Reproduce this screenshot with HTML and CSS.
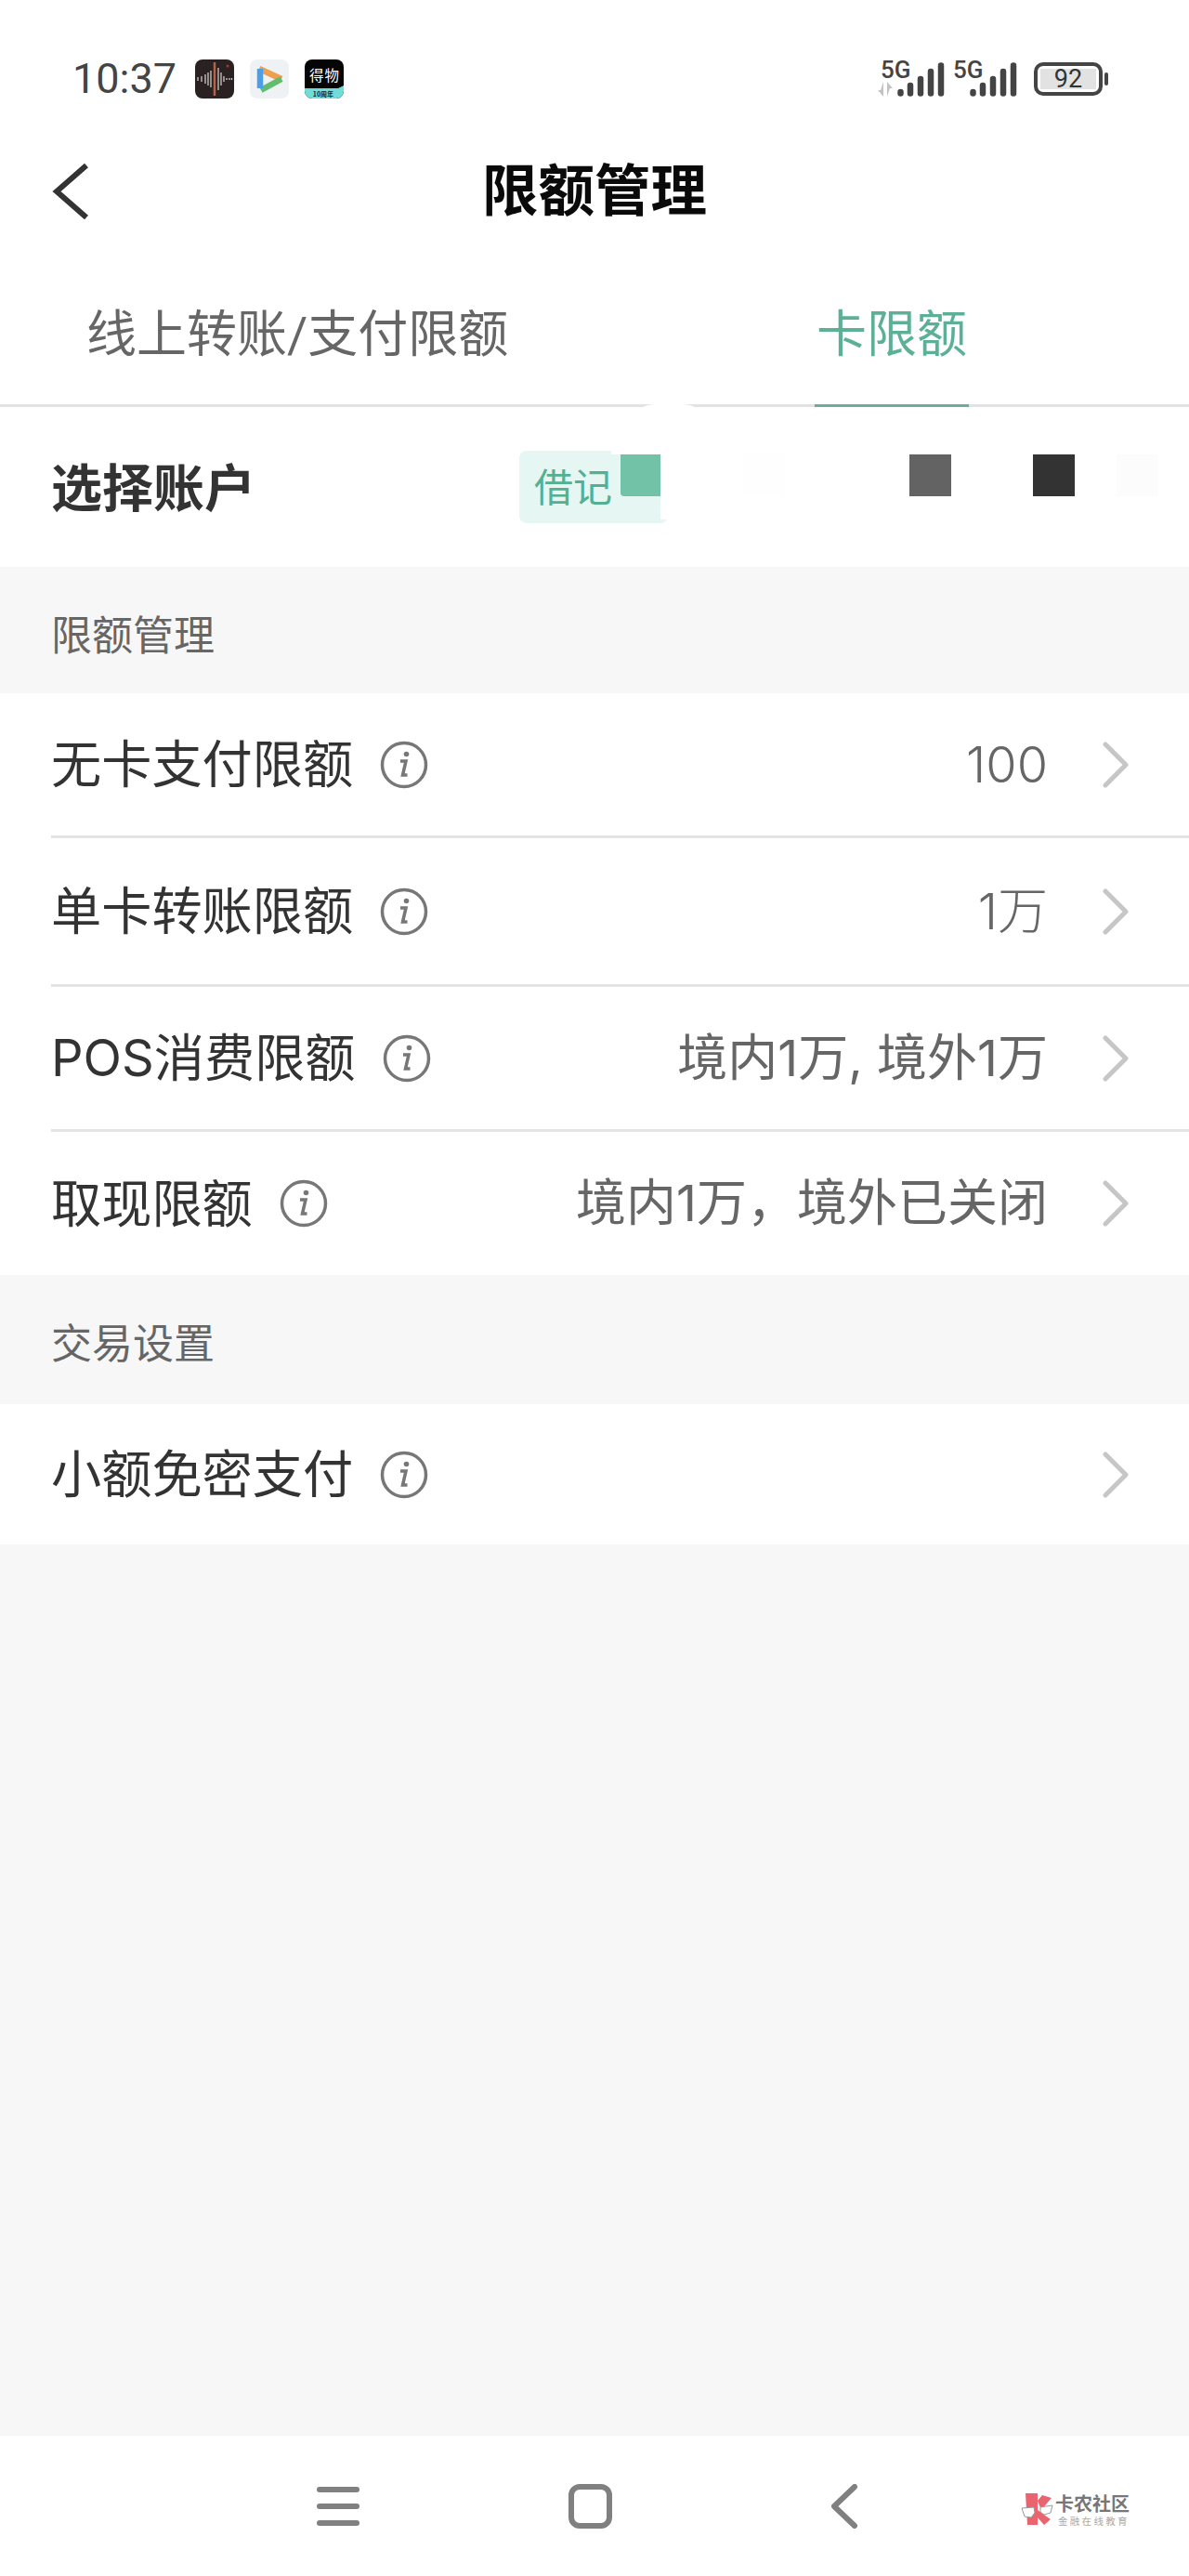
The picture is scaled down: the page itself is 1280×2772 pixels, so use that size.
FILE: index.html
```html
<!DOCTYPE html>
<html lang="zh-CN">
<head>
<meta charset="utf-8">
<title>限额管理</title>
<link rel="stylesheet" href="styles.css">
</head>
<body>
<div class="page">
  <header class="status">
    <div class="status-left">
      <span class="time">10:37</span>
      <svg class="app-icon" viewBox="0 0 42 42"><rect width="42" height="42" rx="8" fill="#2a2222"/><path d="M3 19v4M7 18v6M11 16v10M14 14v14M17 12v18M25 9v24M28 14v14M31 18v6M34 20v2M37 20v2M39.500 20v2" stroke="#cfc8c6" stroke-width="1.300" fill="none"/><path d="M21 3v36" stroke="#b5624a" stroke-width="2.500"/><circle cx="35" cy="7" r="1.500" fill="#a33"/></svg>
      <svg class="app-icon" viewBox="0 0 42 42"><rect width="42" height="42" rx="8" fill="#eef2f5"/><path d="M10 10 L34 21" stroke="#eda04d" stroke-width="6.500" fill="none"/><path d="M12 33 L34 21" stroke="#63bd6e" stroke-width="6.500" fill="none"/><path d="M11 10 V31" stroke="#4c9ee8" stroke-width="6.500" fill="none"/></svg>
      <svg class="app-icon" viewBox="0 0 42 42"><rect width="42" height="42" rx="8" fill="#050505"/><path d="M0 31h36l6-3v6a8 8 0 0 1-8 8H8a8 8 0 0 1-8-8z" fill="#6fdcd8"/><text class="dewu-name" x="21" y="23" text-anchor="middle" textLength="32">得物</text><text class="dewu-sub" x="20" y="39.500" text-anchor="middle">10周年</text></svg>
    </div>
    <div class="status-right">
      <div class="net">
        <span class="net-label">5G</span>
        <svg class="net-arrows" viewBox="0 0 18 16"><path d="M7 0v16L1 9h3zM11 16V0l6 7h-3z" fill="#c3c3c3"/></svg>
      </div>
      <svg class="bars" viewBox="0 0 51 37"><path d="M3.500 32v1.500M14 25v8.500M25 18v15.500M36 10v23.500M47 3.500v30" stroke="#444" stroke-width="6.500" stroke-linecap="round"/></svg>
      <div class="net net-two"><span class="net-label">5G</span></div>
      <svg class="bars" viewBox="0 0 51 37"><path d="M3.500 32v1.500M14 25v8.500M25 18v15.500M36 10v23.500M47 3.500v30" stroke="#444" stroke-width="6.500" stroke-linecap="round"/></svg>
      <div class="battery"><span class="battery-fill">92</span></div>
      <span class="battery-nub"></span>
    </div>
  </header>

  <nav class="nav">
    <svg class="back" viewBox="0 0 40 60"><path d="M37 2 L5 30 L37 58" fill="none" stroke="#333" stroke-width="6"/></svg>
    <h1 class="title">限额管理</h1>
  </nav>

  <div class="tabs">
    <div class="tab tab-online">线上转账/支付限额</div>
    <div class="tab tab-card">卡限额</div>
    <span class="tab-notch"></span>
  </div>

  <section class="account">
    <h2 class="account-title">选择账户</h2>
    <div class="account-cards">
      <div class="badge"><span class="badge-text">借记</span><span class="mask mask-green"></span></div>
      <span class="mask mask-ghost"></span>
      <span class="mask mask-gray"></span>
      <span class="mask mask-dark"></span>
      <span class="mask mask-faint"></span>
    </div>
  </section>

  <main class="content">
    <div class="group-label">限额管理</div>
    <div class="group">
      <div class="row">
        <span class="row-label">无卡支付限额</span>
        <svg class="info" viewBox="0 0 52 52"><use href="#info"/></svg>
        <span class="row-value row-value-light">100</span>
        <svg class="chev" viewBox="0 0 30 50"><use href="#chev"/></svg>
      </div>
      <div class="row row-tall">
        <span class="row-label">单卡转账限额</span>
        <svg class="info" viewBox="0 0 52 52"><use href="#info"/></svg>
        <span class="row-value row-value-light">1万</span>
        <svg class="chev" viewBox="0 0 30 50"><use href="#chev"/></svg>
      </div>
      <div class="row">
        <span class="row-label">POS消费限额</span>
        <svg class="info" viewBox="0 0 52 52"><use href="#info"/></svg>
        <span class="row-value">境内1万, 境外1万</span>
        <svg class="chev" viewBox="0 0 30 50"><use href="#chev"/></svg>
      </div>
      <div class="row row-end">
        <span class="row-label">取现限额</span>
        <svg class="info" viewBox="0 0 52 52"><use href="#info"/></svg>
        <span class="row-value">境内1万，境外已关闭</span>
        <svg class="chev" viewBox="0 0 30 50"><use href="#chev"/></svg>
      </div>
    </div>
    <div class="group-label group-label-second">交易设置</div>
    <div class="group">
      <div class="row row-single">
        <span class="row-label">小额免密支付</span>
        <svg class="info" viewBox="0 0 52 52"><use href="#info"/></svg>
        <span class="row-value"></span>
        <svg class="chev" viewBox="0 0 30 50"><use href="#chev"/></svg>
      </div>
    </div>
  </main>

  <footer class="softkeys">
    <div class="softkey-menu"><span></span><span></span><span></span></div>
    <span class="softkey-home"></span>
    <svg class="softkey-back" viewBox="0 0 32 48"><path d="M28 3 L6 24 L28 45" fill="none" stroke="#808080" stroke-width="6" stroke-linecap="round" stroke-linejoin="round"/></svg>
    <div class="mark">
      <svg class="mark-logo" viewBox="0 0 35 35"><path d="M5 0h13v34H7zM18 8l5-6 10 3-11 13zM18 18l14 10-7 6-8-9z" fill="#ea6470"/><path d="M1 16l13-1 1 6-4 5-7-1zM34 13l-13 2 0 5 4 3 7-2z" fill="#fff" stroke="#9a9a9a" stroke-width="1"/></svg>
      <div class="mark-text">
        <span class="mark-name">卡农社区</span>
        <span class="mark-sub">金融在线教育</span>
      </div>
    </div>
  </footer>
</div>
<svg class="defs" aria-hidden="true">
  <defs>
    <g id="info">
      <circle cx="26" cy="26" r="23.500" fill="none" stroke="#777" stroke-width="3.500"/>
      <path d="M22 22h6l-3.500 15h5" fill="none" stroke="#777" stroke-width="3.500"/>
      <circle cx="28.500" cy="14.500" r="2.800" fill="#777"/>
    </g>
    <path id="chev" d="M4 3 L26 25 L4 47" fill="none" stroke="#c6c6c6" stroke-width="5" stroke-linecap="round" stroke-linejoin="round"/>
  </defs>
</svg>
</body>
</html>
```

FILE: styles.css
```css
* { box-sizing: border-box; margin: 0; padding: 0; }
html, body { width: 1280px; height: 2772px; overflow: hidden; }
body {
  background: #fff;
  font-family: Roboto, "Noto Sans CJK SC", sans-serif;
  color: #333;
}
.page { display: flex; flex-direction: column; height: 2772px; }
.defs { width: 0; height: 0; display: block; }

/* status bar */
.status {
  height: 140px;
  padding: 64px 87px 0 78px;
  display: flex;
  justify-content: space-between;
  align-items: flex-start;
}
.status-left { display: flex; align-items: center; height: 42px; }
.time { font-size: 45px; line-height: 42px; color: #444; width: 132px; }
.app-icon { width: 42px; height: 42px; margin-right: 17px; }
.dewu-name { font-family: "Noto Sans CJK SC", sans-serif; font-size: 15.500px; fill: #fff; }
.dewu-sub { font-family: "Noto Sans CJK SC", sans-serif; font-size: 7px; font-weight: 700; fill: #123; }
.status-right { display: flex; align-items: flex-start; height: 42px; }
.net { display: flex; flex-direction: column; width: 36px; height: 42px; }
.net-two { margin-left: 5px; }
.net-label { font-size: 26px; line-height: 22px; font-weight: 500; color: #444; padding-left: 4px; }
.net-arrows { width: 18px; height: 16px; margin-top: 2px; }
.bars { width: 51px; height: 37px; margin-top: 3px; margin-left: -14px; }
.battery {
  width: 74px;
  height: 36px;
  margin-left: 18px;
  margin-top: 3px;
  border: 4px solid #444;
  border-radius: 10px;
  padding: 3px;
}
.battery-fill {
  display: block;
  width: 100%;
  height: 100%;
  background: #e2e2e2;
  font-size: 27px;
  line-height: 22px;
  text-align: center;
  color: #333;
}
.battery-nub { width: 4px; height: 14px; background: #444; border-radius: 2px; margin: 14px 0 0 2px; }

/* nav */
.nav { height: 130px; position: relative; display: flex; align-items: center; justify-content: center; padding-top: 4px; }
.back { position: absolute; left: 56px; top: 36px; width: 40px; height: 60px; }
.title { font-size: 60.500px; font-weight: 700; color: #0a0a0a; line-height: 1; }

/* tabs */
.tabs {
  height: 168px;
  border-bottom: 3px solid #e2e2e2;
  display: flex;
  align-items: stretch;
  padding-left: 93px;
  position: relative;
}
.tab { font-size: 54px; line-height: 150px; height: 168px; padding-top: 16px; color: #666; white-space: nowrap; }
.tab-online { width: 784px; }
.tab-card {
  width: 166px;
  text-align: center;
  color: #5bb096;
  border-bottom: 3px solid #6aae98;
}
.tab-notch {
  position: absolute;
  left: 692px;
  bottom: -9px;
  width: 56px;
  height: 10px;
  background: #fff;
  border-radius: 50%;
}

/* account */
.account { height: 172px; display: flex; align-items: center; padding-left: 55px; }
.account-title { width: 504px; font-size: 55px; font-weight: 700; color: #333; line-height: 1; margin-top: 4px; }
.account-cards { display: flex; align-items: flex-start; height: 78px; }
.badge {
  position: relative;
  width: 160px;
  height: 78px;
  background: #e6f6f2;
  border-radius: 8px;
  display: flex;
  padding: 4px 0 0 16px;
}
.badge::before {
  content: "";
  position: absolute;
  left: 99px;
  top: 0;
  width: 61px;
  height: 4px;
  background: #fff;
}
.badge::after {
  content: "";
  position: absolute;
  right: 0;
  top: 0;
  width: 8px;
  height: 74px;
  background: #fff;
}
.badge-text { font-size: 42px; line-height: 74px; color: #55b092; width: 93px; white-space: nowrap; }
.mask { display: block; width: 45px; height: 45px; }
.mask-green { background: #72c2a8; border-bottom-left-radius: 4px; }
.mask-ghost { background: #fefefe; margin: 4px 0 0 81px; }
.mask-gray { background: #636363; margin: 4px 0 0 134px; }
.mask-dark { background: #333; margin: 4px 0 0 88px; }
.mask-faint { background: #fcfcfc; margin: 4px 0 0 45px; }

/* list */
.content { flex: 1; background: #f7f7f7; }
.group-label { height: 136px; padding: 0 0 0 55px; font-size: 44px; line-height: 150px; color: #666; }
.group-label-second { height: 139px; line-height: 150px; }
.group { background: #fff; padding-left: 55px; }
.row {
  height: 156px;
  display: flex;
  align-items: center;
  padding-right: 64px;
  border-bottom: 3px solid #e4e4e4;
}
.row-tall { height: 160px; }
.row-end { height: 154px; border-bottom: 0; }
.row-single { height: 151px; border-bottom: 0; }
.row-label { font-family: Inter, "Noto Sans CJK SC", sans-serif; font-size: 54.200px; line-height: 1; color: #333; white-space: nowrap; }
.info { width: 52px; height: 52px; margin-left: 29px; flex: none; }
.row-value { font-family: Inter, "Noto Sans CJK SC", sans-serif; flex: 1; text-align: right; font-size: 54px; line-height: 1; color: #666; white-space: nowrap; }
.row-value-light { font-weight: 300; }
.chev { width: 30px; height: 50px; margin-left: 58px; flex: none; }

/* soft keys */
.softkeys {
  height: 152px;
  background: #fff;
  border-top: 1px solid #f4f4f4;
  display: flex;
  align-items: center;
  padding: 0 0 0 341px;
}
.softkey-menu { width: 46px; height: 42px; display: flex; flex-direction: column; justify-content: space-between; }
.softkey-menu span { height: 6px; background: #808080; border-radius: 3px; }
.softkey-home { width: 47px; height: 48px; margin-left: 225px; border: 6px solid #808080; border-radius: 12px; }
.softkey-back { width: 32px; height: 48px; margin-left: 233px; }
.mark { display: flex; align-items: center; margin-left: 175px; margin-top: 8px; }
.mark-logo { width: 35px; height: 35px; }
.mark-text { display: flex; flex-direction: column; margin-left: 2px; font-family: "Noto Sans CJK SC", sans-serif; }
.mark-name { font-size: 20px; line-height: 23px; font-weight: 700; color: #777; white-space: nowrap; }
.mark-sub { font-size: 10.500px; line-height: 15px; color: #aaa; white-space: nowrap; letter-spacing: 2.300px; padding-left: 3px; }
```
